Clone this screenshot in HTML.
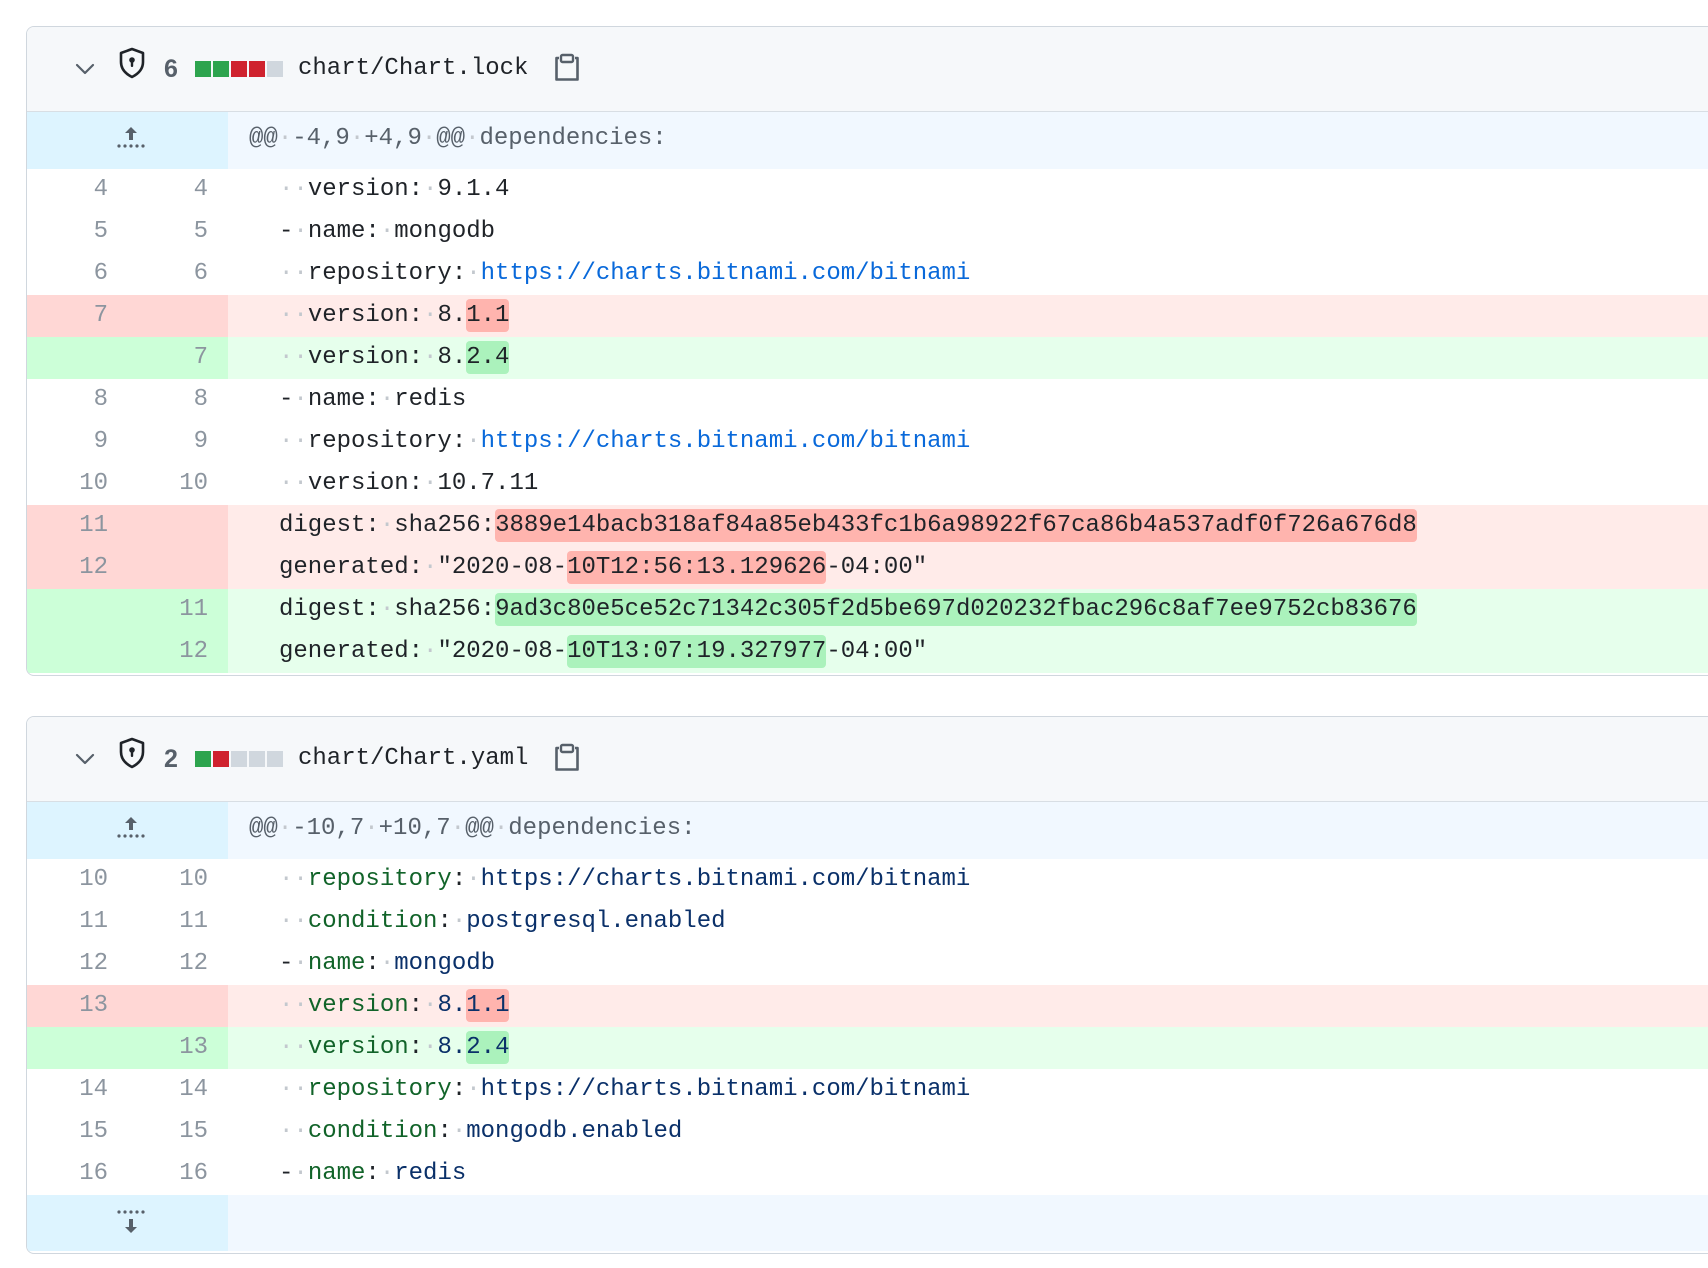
<!DOCTYPE html>
<html><head><meta charset="utf-8">
<style>
html,body{margin:0;padding:0;background:#fff;width:1708px;height:1268px;overflow:hidden}
body{font-family:"Liberation Mono",monospace;font-size:24px;color:#1f2328;position:relative}
.box{position:absolute;left:26px;width:1720px;border:1px solid #d0d7de;border-radius:8px;overflow:hidden;background:#fff}
.hdr{height:84px;background:#f6f8fa;border-bottom:1px solid #d8dee4;position:relative}
.hdr>*{position:absolute}
.num{left:137px;top:0;line-height:84px;font-weight:bold;color:#57606a;font-family:"Liberation Sans",sans-serif;font-size:25px}
.bars{left:168px;top:34px;display:flex;gap:2px}
.bars i{display:block;width:16px;height:16px}
.g{background:#2da44e}.r{background:#cf222e}.n{background:#d0d7de}
.fn{left:271px;top:0;line-height:84px}
.row{display:flex;height:42px;line-height:42px;white-space:pre}
.o,.w{width:100px;text-align:right;box-sizing:border-box;color:#8c959f}
.o{padding-right:19px}.w{width:101px;padding-right:20px}
.c{padding-left:51px;flex:1}
.hunk{height:57px;display:flex;background:#f1f8ff}
.hunk .gt{width:201px;background:#ddf4ff;position:relative}
.hunk .t{line-height:54px;padding-left:21px;color:#57606a}
.del{background:#ffebe9}.del .o,.del .w{background:#ffd7d5}
.add{background:#e6ffec}.add .o,.add .w{background:#ccffd8}
.d{color:#c3c8ce}
.dh{background:#ffb4ae;border-radius:4px;padding:3px 0}
.ah{background:#abf2bc;border-radius:4px;padding:3px 0}
.lk{color:#0969da}
.k{color:#116329}.v{color:#0a3069}
</style></head><body>

<div class="box" style="top:26px;height:648px">
 <div class="hdr">
  <svg style="left:48px;top:32px" width="20" height="20" viewBox="0 0 20 20"><path d="M2 6l8 8 8-8" fill="none" stroke="#57606a" stroke-width="2.2" stroke-linecap="round" stroke-linejoin="round"/></svg>
  <svg style="left:90px;top:20px" width="30" height="32" viewBox="0 0 30 32"><path d="M15 2L4 6v9c0 7 5 12 11 15 6-3 11-8 11-15V6z" fill="none" stroke="#1f2328" stroke-width="2.6" stroke-linejoin="round"/><circle cx="15" cy="13" r="2.8" fill="#1f2328"/><rect x="13.8" y="13" width="2.4" height="7" rx="1" fill="#1f2328"/></svg>
  <div class="num">6</div>
  <div class="bars"><i class="g"></i><i class="g"></i><i class="r"></i><i class="r"></i><i class="n"></i></div>
  <div class="fn">chart/Chart.lock</div>
  <svg style="left:526px;top:26px" width="28" height="30" viewBox="0 0 28 30"><path d="M6 5H3.5v21.5h21V5H22" fill="none" stroke="#57606a" stroke-width="2.6" stroke-linejoin="round"/><rect x="8" y="2" width="12" height="7" rx="1.5" fill="none" stroke="#57606a" stroke-width="2.4"/></svg>
 </div>
 <div class="hunk"><div class="gt"><svg style="position:absolute;left:88px;top:13px" width="32" height="26" viewBox="0 0 32 26"><path d="M16 2l-6 6h4v7h4V8h4z" fill="#57606a"/><g fill="#57606a"><circle cx="4" cy="21" r="1.6"/><circle cx="10" cy="21" r="1.6"/><circle cx="16" cy="21" r="1.6"/><circle cx="22" cy="21" r="1.6"/><circle cx="28" cy="21" r="1.6"/></g></svg></div><div class="t">@@<span class="d">·</span>-4,9<span class="d">·</span>+4,9<span class="d">·</span>@@<span class="d">·</span>dependencies:</div></div>
 <div class="row"><div class="o">4</div><div class="w">4</div><div class="c"><span class="d">··</span>version:<span class="d">·</span>9.1.4</div></div>
 <div class="row"><div class="o">5</div><div class="w">5</div><div class="c">-<span class="d">·</span>name:<span class="d">·</span>mongodb</div></div>
 <div class="row"><div class="o">6</div><div class="w">6</div><div class="c"><span class="d">··</span>repository:<span class="d">·</span><span class="lk">https://charts.bitnami.com/bitnami</span></div></div>
 <div class="row del"><div class="o">7</div><div class="w"></div><div class="c"><span class="d">··</span>version:<span class="d">·</span>8.<span class="dh">1.1</span></div></div>
 <div class="row add"><div class="o"></div><div class="w">7</div><div class="c"><span class="d">··</span>version:<span class="d">·</span>8.<span class="ah">2.4</span></div></div>
 <div class="row"><div class="o">8</div><div class="w">8</div><div class="c">-<span class="d">·</span>name:<span class="d">·</span>redis</div></div>
 <div class="row"><div class="o">9</div><div class="w">9</div><div class="c"><span class="d">··</span>repository:<span class="d">·</span><span class="lk">https://charts.bitnami.com/bitnami</span></div></div>
 <div class="row"><div class="o">10</div><div class="w">10</div><div class="c"><span class="d">··</span>version:<span class="d">·</span>10.7.11</div></div>
 <div class="row del"><div class="o">11</div><div class="w"></div><div class="c">digest:<span class="d">·</span>sha256:<span class="dh">3889e14bacb318af84a85eb433fc1b6a98922f67ca86b4a537adf0f726a676d8</span></div></div>
 <div class="row del"><div class="o">12</div><div class="w"></div><div class="c">generated:<span class="d">·</span>"2020-08-<span class="dh">10T12:56:13.129626</span>-04:00"</div></div>
 <div class="row add"><div class="o"></div><div class="w">11</div><div class="c">digest:<span class="d">·</span>sha256:<span class="ah">9ad3c80e5ce52c71342c305f2d5be697d020232fbac296c8af7ee9752cb83676</span></div></div>
 <div class="row add"><div class="o"></div><div class="w">12</div><div class="c">generated:<span class="d">·</span>"2020-08-<span class="ah">10T13:07:19.327977</span>-04:00"</div></div>
</div>

<div class="box" style="top:716px;height:536px">
 <div class="hdr">
  <svg style="left:48px;top:32px" width="20" height="20" viewBox="0 0 20 20"><path d="M2 6l8 8 8-8" fill="none" stroke="#57606a" stroke-width="2.2" stroke-linecap="round" stroke-linejoin="round"/></svg>
  <svg style="left:90px;top:20px" width="30" height="32" viewBox="0 0 30 32"><path d="M15 2L4 6v9c0 7 5 12 11 15 6-3 11-8 11-15V6z" fill="none" stroke="#1f2328" stroke-width="2.6" stroke-linejoin="round"/><circle cx="15" cy="13" r="2.8" fill="#1f2328"/><rect x="13.8" y="13" width="2.4" height="7" rx="1" fill="#1f2328"/></svg>
  <div class="num">2</div>
  <div class="bars"><i class="g"></i><i class="r"></i><i class="n"></i><i class="n"></i><i class="n"></i></div>
  <div class="fn">chart/Chart.yaml</div>
  <svg style="left:526px;top:26px" width="28" height="30" viewBox="0 0 28 30"><path d="M6 5H3.5v21.5h21V5H22" fill="none" stroke="#57606a" stroke-width="2.6" stroke-linejoin="round"/><rect x="8" y="2" width="12" height="7" rx="1.5" fill="none" stroke="#57606a" stroke-width="2.4"/></svg>
 </div>
 <div class="hunk"><div class="gt"><svg style="position:absolute;left:88px;top:13px" width="32" height="26" viewBox="0 0 32 26"><path d="M16 2l-6 6h4v7h4V8h4z" fill="#57606a"/><g fill="#57606a"><circle cx="4" cy="21" r="1.6"/><circle cx="10" cy="21" r="1.6"/><circle cx="16" cy="21" r="1.6"/><circle cx="22" cy="21" r="1.6"/><circle cx="28" cy="21" r="1.6"/></g></svg></div><div class="t">@@<span class="d">·</span>-10,7<span class="d">·</span>+10,7<span class="d">·</span>@@<span class="d">·</span>dependencies:</div></div>
 <div class="row"><div class="o">10</div><div class="w">10</div><div class="c"><span class="d">··</span><span class="k">repository</span>:<span class="d">·</span><span class="v">https://charts.bitnami.com/bitnami</span></div></div>
 <div class="row"><div class="o">11</div><div class="w">11</div><div class="c"><span class="d">··</span><span class="k">condition</span>:<span class="d">·</span><span class="v">postgresql.enabled</span></div></div>
 <div class="row"><div class="o">12</div><div class="w">12</div><div class="c">-<span class="d">·</span><span class="k">name</span>:<span class="d">·</span><span class="v">mongodb</span></div></div>
 <div class="row del"><div class="o">13</div><div class="w"></div><div class="c"><span class="d">··</span><span class="k">version</span>:<span class="d">·</span><span class="v">8.<span class="dh">1.1</span></span></div></div>
 <div class="row add"><div class="o"></div><div class="w">13</div><div class="c"><span class="d">··</span><span class="k">version</span>:<span class="d">·</span><span class="v">8.<span class="ah">2.4</span></span></div></div>
 <div class="row"><div class="o">14</div><div class="w">14</div><div class="c"><span class="d">··</span><span class="k">repository</span>:<span class="d">·</span><span class="v">https://charts.bitnami.com/bitnami</span></div></div>
 <div class="row"><div class="o">15</div><div class="w">15</div><div class="c"><span class="d">··</span><span class="k">condition</span>:<span class="d">·</span><span class="v">mongodb.enabled</span></div></div>
 <div class="row"><div class="o">16</div><div class="w">16</div><div class="c">-<span class="d">·</span><span class="k">name</span>:<span class="d">·</span><span class="v">redis</span></div></div>
 <div class="hunk" style="height:56px"><div class="gt"><svg style="position:absolute;left:88px;top:14px" width="32" height="28" viewBox="0 0 32 28"><g fill="#57606a"><circle cx="4" cy="3" r="1.6"/><circle cx="10" cy="3" r="1.6"/><circle cx="16" cy="3" r="1.6"/><circle cx="22" cy="3" r="1.6"/><circle cx="28" cy="3" r="1.6"/></g><path d="M16 24l-6-6h4v-8h4v8h4z" fill="#57606a"/></svg></div><div class="t"></div></div>
</div>
</body></html>
